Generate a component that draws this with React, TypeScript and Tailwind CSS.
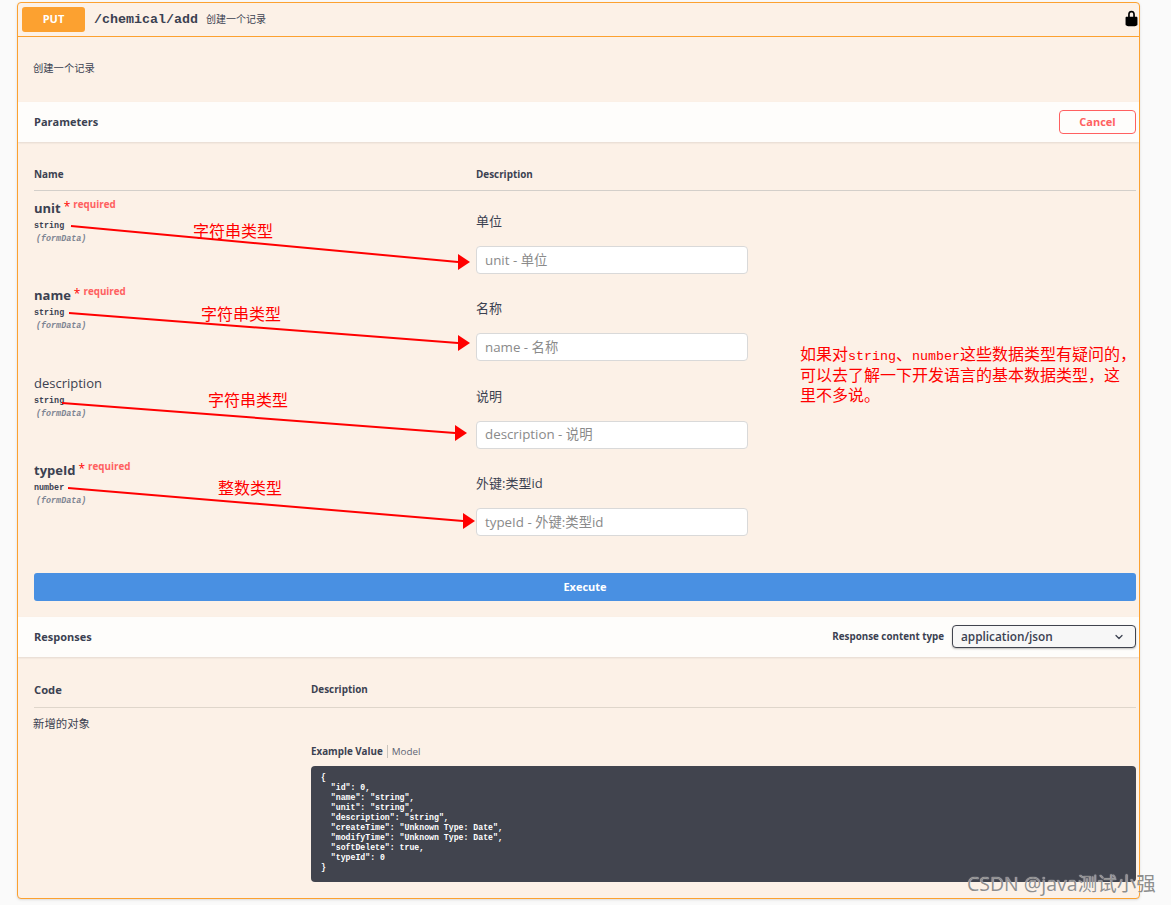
import React from 'react';
import { ChevronDown } from 'lucide-react';

const sans = "font-['Open_Sans','Noto_Sans_CJK_SC',sans-serif]";
const mono = "font-['Liberation_Mono','Noto_Sans_CJK_SC',monospace]";
const note = "font-['Noto_Sans_CJK_SC',sans-serif] text-[#ff0000]";

const params = [
  { name: 'unit', type: 'string', desc: '单位', hint: 'unit - 单位', required: true },
  { name: 'name', type: 'string', desc: '名称', hint: 'name - 名称', required: true },
  { name: 'description', type: 'string', desc: '说明', hint: 'description - 说明', required: false },
  { name: 'typeId', type: 'number', desc: '外键:类型id', hint: 'typeId - 外键:类型id', required: true },
];

const arrows = [
  { x1: 71, y1: 226, x2: 458, y2: 262, head: '458,254 470,262 458,270' },
  { x1: 69, y1: 313, x2: 458, y2: 343, head: '458,335 470,343 458,351' },
  { x1: 62, y1: 403, x2: 455, y2: 433, head: '455,425 467,433 455,441' },
  { x1: 68, y1: 488, x2: 463, y2: 521, head: '463,513 475,521 463,529' },
];

const labels = [
  { text: '字符串类型', cls: 'left-[193px] top-[219px]' },
  { text: '字符串类型', cls: 'left-[201px] top-[302px]' },
  { text: '字符串类型', cls: 'left-[208px] top-[388px]' },
  { text: '整数类型', cls: 'left-[218px] top-[476px]' },
];

const example = `{
  "id": 0,
  "name": "string",
  "unit": "string",
  "description": "string",
  "createTime": "Unknown Type: Date",
  "modifyTime": "Unknown Type: Date",
  "softDelete": true,
  "typeId": 0
}`;

function LockIcon() {
  return (
    <svg viewBox="0 0 20 20" className="h-[17px] w-[17px] fill-black">
      <path d="M15.8 8H14V5.6C14 2.703 12.665 1 10 1 7.334 1 6 2.703 6 5.6V8H4c-.553 0-1 .646-1 1.199V17c0 .549.428 1.139.951 1.307l1.197.387C5.672 18.861 6.55 19 7.1 19h5.8c.549 0 1.428-.139 1.951-.307l1.196-.387c.524-.167.953-.757.953-1.306V9.199C17 8.646 16.352 8 15.8 8zM12 8H8V5.199C8 3.754 8.797 3 10 3c1.203 0 2 .754 2 2.199V8z" />
    </svg>
  );
}

function ParamRow({ p }: { p: (typeof params)[number] }) {
  return (
    <div className="flex h-[87.4px]">
      <div className="w-[442px] pt-[8px]">
        <div className="flex h-[18px] items-start">
          <span className={`text-[13px] leading-[18px] text-[#3b4151] ${p.required ? 'font-bold' : ''}`}>{p.name}</span>
          {p.required && (
            <>
              <span className="ml-[3px] text-[12px] leading-[15px] text-[#ff0000]">*</span>
              <span className="ml-[3px] text-[9.8px] leading-[12px] font-bold text-[#ff6060]">required</span>
            </>
          )}
        </div>
        <div className={`${mono} mt-[3px] text-[8.4px] leading-[12px] font-bold text-[#3b4151]`}>{p.type}</div>
        <div className={`${mono} mt-[1px] ml-[2px] text-[8.4px] leading-[12px] font-bold italic text-[#7d8492]`}>(formData)</div>
      </div>
      <div className="pt-[21px]">
        <div className="text-[13px] leading-[18px] text-[#3b4151]">{p.desc}</div>
        <div className="mt-[16px] flex h-[28px] w-[272px] items-center rounded-[4px] border border-[#d9d9d9] bg-white px-[8px] pt-[1px] text-[13.33px] text-[#8a8a8a]">
          {p.hint}
        </div>
      </div>
    </div>
  );
}

export default function App() {
  return (
    <div className={`${sans} relative h-[905px] overflow-hidden bg-[#fafafa] pt-[2px] pl-[17px]`}>
      <div className="h-[897px] w-[1123px] overflow-hidden rounded-[4px] border border-[#fca130] bg-[#fcf1e7] shadow-sm">
        {/* summary */}
        <div className="flex h-[34px] items-center border-b border-[#fca130] pl-[4px]">
          <div className="flex h-[25px] w-[63px] items-center justify-center rounded-[3px] bg-[#fca130] text-[11px] font-bold text-white">PUT</div>
          <span className={`${mono} ml-[9px] text-[13.33px] font-bold text-[#3b4151]`}>/chemical/add</span>
          <span className="ml-[8px] text-[10px] text-[#3b4151]">创建一个记录</span>
          <div className="mr-[-1px] ml-auto flex items-center pb-[2px]"><LockIcon /></div>
        </div>

        <div className="flex h-[65px] items-center pb-[1px] pl-[15px] text-[10.3px] text-[#3b4151]">创建一个记录</div>

        {/* parameters */}
        <div className="flex h-[40px] items-center justify-between bg-[#fefdfb] pr-[3px] pl-[16px] shadow-[0_1px_2px_rgba(0,0,0,0.1)]">
          <span className="text-[11px] font-bold text-[#3b4151]">Parameters</span>
          <button className="h-[24px] w-[77px] rounded-[4px] border border-[#ff6060] text-[11px] font-bold text-[#ff6060]">Cancel</button>
        </div>

        <div className="pr-[3px] pl-[16px]">
          <div className="flex h-[49px] items-end border-b border-[#d3cfca] pb-[8px] text-[9.9px] font-bold text-[#3b4151]">
            <div className="w-[442px]">Name</div>
            <div>Description</div>
          </div>
          {params.map((p) => (
            <ParamRow key={p.name} p={p} />
          ))}
          <button className="mt-[32.4px] h-[28px] w-full rounded-[3px] bg-[#4990e2] text-[11px] font-bold text-white">Execute</button>
        </div>

        {/* responses */}
        <div className="mt-[16px] flex h-[40px] items-center justify-between bg-[#fefdfb] pr-[3px] pl-[16px] shadow-[0_1px_2px_rgba(0,0,0,0.1)]">
          <span className="text-[11px] font-bold text-[#3b4151]">Responses</span>
          <div className="flex items-center gap-[8px]">
            <span className="text-[9.8px] font-bold text-[#3b4151]">Response content type</span>
            <div className="flex h-[23px] w-[184px] items-center justify-between rounded-[4px] border border-[#41444e] bg-[#f7f7f7] pr-[10px] pl-[8px] text-[11.8px] font-semibold text-[#3b4151] shadow-[0_1px_2px_rgba(0,0,0,0.25)]">
              application/json
              <ChevronDown className="h-[12px] w-[12px]" strokeWidth={2.5} />
            </div>
          </div>
        </div>

        <div className="pr-[3px] pl-[16px]">
          <div className="flex h-[51px] items-end border-b border-[#dfd6cb] pb-[8px] text-[9.9px] font-bold text-[#3b4151]">
            <div className="w-[277px] text-[11.2px]">Code</div>
            <div className="pb-[2px]">Description</div>
          </div>
          <div className="flex">
            <div className="-ml-[1px] w-[278px] pt-[7px] text-[11.4px] text-[#3b4151]">新增的对象</div>
            <div className="flex-1 pt-[37px]">
              <div className="flex h-[14px] items-center text-[9.8px] text-[#3b4151]">
                <span className="font-bold">Example Value</span>
                <span className="mx-[4px] h-[13px] w-px bg-[#c9c4bd]" />
                <span className="text-[#5f6675]">Model</span>
              </div>
              <pre className={`${mono} mt-[7px] h-[116px] rounded-[4px] bg-[#41444e] px-[10px] pt-[7px] text-[8.2px] leading-[10px] font-bold text-white`}>{example}</pre>
            </div>
          </div>
        </div>
      </div>

      {/* red annotations drawn over the screenshot */}
      <svg className="pointer-events-none absolute top-0 left-0 h-[905px] w-[1171px]" viewBox="0 0 1171 905">
        {arrows.map((a, i) => (
          <g key={i}>
            <line x1={a.x1} y1={a.y1} x2={a.x2} y2={a.y2} stroke="#ff0000" strokeWidth="2" />
            <polygon points={a.head} fill="#ff0000" />
          </g>
        ))}
      </svg>
      {labels.map((l, i) => (
        <div key={i} className={`${note} absolute ${l.cls} text-[16px] leading-[22px]`}>{l.text}</div>
      ))}
      <div className={`${note} absolute top-[343px] left-[800px] text-[16px] leading-[20.5px] whitespace-nowrap`}>
        <div>
          如果对<span className={`${mono} text-[13.33px] leading-none`}>string</span>、<span className={`${mono} text-[13.33px] leading-none`}>number</span>这些数据类型有疑问的，
        </div>
        <div>可以去了解一下开发语言的基本数据类型，这</div>
        <div>里不多说。</div>
      </div>
      <div className="absolute top-[870px] left-[967px] text-[19.5px] leading-[27px] whitespace-nowrap text-[#8e8e8e] [text-shadow:0_0_1px_#ffffff]">CSDN @java测试小强</div>
    </div>
  );
}
